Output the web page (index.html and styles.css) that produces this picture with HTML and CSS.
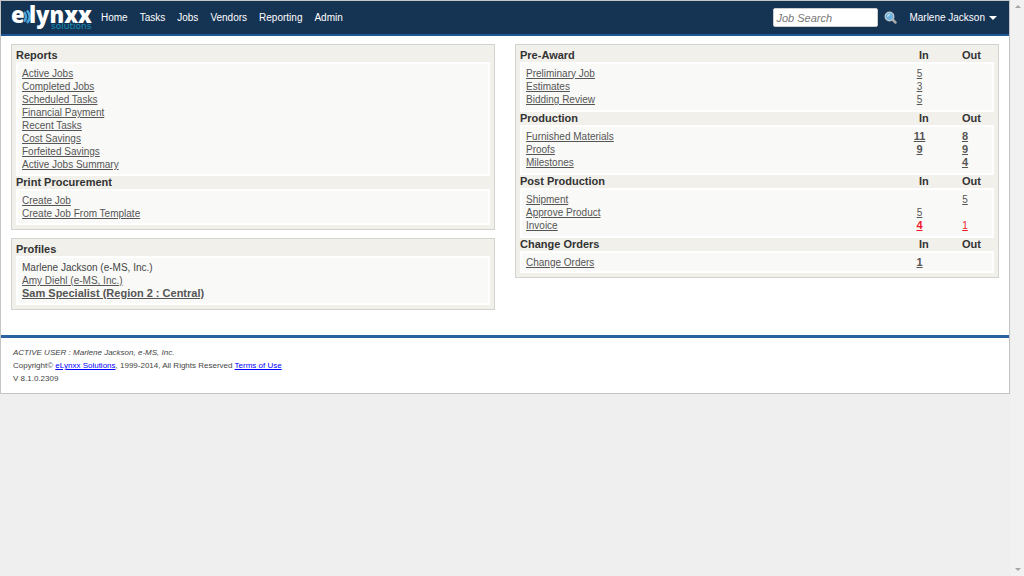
FILE: index.html
```
<!DOCTYPE html>
<html lang="en">
<head>
<meta charset="utf-8">
<title>eLynxx Solutions</title>
<link rel="stylesheet" href="styles.css">
</head>
<body>
<div class="page">
  <header class="topbar">
    <a class="logo" href="#" aria-label="eLynxx Solutions">
      <svg width="82" height="30" viewBox="0 0 82 30">
        <text class="logo-name" x="0" y="20">e</text>
        <path d="M13 9q4 5 0 9.500M16 7.500q5.500 6.500 0 12.500" fill="none" stroke="#4aa5dc" stroke-width="2.500"/>
        <text class="logo-name" x="18" y="20">lynxx</text>
        <text class="logo-sub" x="40" y="26">solutions</text>
      </svg>
    </a>
    <nav class="nav">
      <a href="#">Home</a>
      <a href="#">Tasks</a>
      <a href="#">Jobs</a>
      <a href="#">Vendors</a>
      <a href="#">Reporting</a>
      <a href="#">Admin</a>
    </nav>
    <form class="search">
      <input type="text" placeholder="Job Search" aria-label="Job Search">
      <button type="button" aria-label="Search">
        <svg width="14" height="14" viewBox="0 0 14 14">
          <path d="M8.500 8.500l3 3" stroke="#a9a9a9" stroke-width="2.500" stroke-linecap="round"/>
          <circle cx="5.500" cy="5.500" r="4.300" fill="#6db2dc" stroke="#b9c4cc" stroke-width="1.400"/>
          <path d="M3 6q0-3 3.500-3.200q-.5 2.500-3.500 3.200z" fill="#b5dcf2"/>
        </svg>
      </button>
    </form>
    <button class="user" type="button">Marlene Jackson<span class="caret"></span></button>
  </header>

  <main class="columns">
    <div class="column">
      <section class="panel">
        <h2>Reports</h2>
        <ul class="box">
          <li><a href="#">Active Jobs</a></li>
          <li><a href="#">Completed Jobs</a></li>
          <li><a href="#">Scheduled Tasks</a></li>
          <li><a href="#">Financial Payment</a></li>
          <li><a href="#">Recent Tasks</a></li>
          <li><a href="#">Cost Savings</a></li>
          <li><a href="#">Forfeited Savings</a></li>
          <li><a href="#">Active Jobs Summary</a></li>
        </ul>
        <h2>Print Procurement</h2>
        <ul class="box">
          <li><a href="#">Create Job</a></li>
          <li><a href="#">Create Job From Template</a></li>
        </ul>
      </section>
      <section class="panel">
        <h2>Profiles</h2>
        <ul class="box">
          <li>Marlene Jackson (e-MS, Inc.)</li>
          <li><a href="#">Amy Diehl (e-MS, Inc.)</a></li>
          <li><a class="strong" href="#">Sam Specialist (Region 2 : Central)</a></li>
        </ul>
      </section>
    </div>

    <div class="column">
      <section class="panel">
        <table class="counts">
          <colgroup><col><col class="col-in"><col class="col-out"></colgroup>
          <tbody>
            <tr><th>Pre-Award</th><th>In</th><th>Out</th></tr>
            <tr><td><a href="#">Preliminary Job</a></td><td><a href="#">5</a></td><td></td></tr>
            <tr><td><a href="#">Estimates</a></td><td><a href="#">3</a></td><td></td></tr>
            <tr><td><a href="#">Bidding Review</a></td><td><a href="#">5</a></td><td></td></tr>
          </tbody>
          <tbody>
            <tr><th>Production</th><th>In</th><th>Out</th></tr>
            <tr><td><a href="#">Furnished Materials</a></td><td><a class="strong" href="#">11</a></td><td><a class="strong" href="#">8</a></td></tr>
            <tr><td><a href="#">Proofs</a></td><td><a class="strong" href="#">9</a></td><td><a class="strong" href="#">9</a></td></tr>
            <tr><td><a href="#">Milestones</a></td><td></td><td><a class="strong" href="#">4</a></td></tr>
          </tbody>
          <tbody>
            <tr><th>Post Production</th><th>In</th><th>Out</th></tr>
            <tr><td><a href="#">Shipment</a></td><td></td><td><a href="#">5</a></td></tr>
            <tr><td><a href="#">Approve Product</a></td><td><a href="#">5</a></td><td></td></tr>
            <tr><td><a href="#">Invoice</a></td><td><a class="late strong" href="#">4</a></td><td><a class="late" href="#">1</a></td></tr>
          </tbody>
          <tbody>
            <tr><th>Change Orders</th><th>In</th><th>Out</th></tr>
            <tr><td><a href="#">Change Orders</a></td><td><a class="strong" href="#">1</a></td><td></td></tr>
          </tbody>
        </table>
      </section>
    </div>
  </main>

  <footer class="footer">
    <p class="active-user">ACTIVE USER : Marlene Jackson, e-MS, Inc.</p>
    <p>Copyright© <a href="#">eLynxx Solutions</a>, 1999-2014, All Rights Reserved <a href="#">Terms of Use</a></p>
    <p>V 8.1.0.2309</p>
  </footer>
</div>
<div class="scrolltrack"><span class="arrow-up"></span><span class="arrow-down"></span></div>
</body>
</html>
```
FILE: styles.css
```
* { box-sizing: border-box; }

body {
  margin: 0;
  display: flex;
  align-items: flex-start;
  min-height: 100vh;
  background: #efefef;
  color: #444;
  font: 10px/13px "Liberation Sans", Arial, sans-serif;
}

h2, p, ul { margin: 0; padding: 0; list-style: none; }
button, input { font: inherit; }
button { border: 0; padding: 0; background: none; color: inherit; cursor: pointer; }

.page {
  flex: 1;
  margin-right: 1px;
  background: #fff;
  border: 1px solid #c4c4c4;
}

.topbar {
  display: flex;
  align-items: center;
  height: 35px;
  padding: 0 12px 0 10px;
  background: #153353;
  border-bottom: 2px solid #1f5796;
  color: #fff;
}

.logo { display: flex; }
.logo svg { overflow: visible; }
.logo-name {
  fill: #fff;
  font: 800 22px "Open Sans", sans-serif;
}
.logo-sub {
  fill: #1790b8;
  font: 9px "DejaVu Sans", sans-serif;
}

.nav { display: flex; gap: 12px; margin-left: 8px; }
.nav a { color: #fff; text-decoration: none; }

.search { display: flex; align-items: center; gap: 6px; margin-left: auto; }
.search input {
  width: 105px;
  height: 19px;
  padding: 0 2px;
  border: 1px solid #ccc;
  border-radius: 2px;
  background: #fff;
  font-size: 11px;
}
.search input::placeholder { color: #777; font-style: italic; opacity: 1; }
.search button { display: flex; }

.user { display: flex; align-items: center; gap: 4px; margin-left: 11px; }
.caret {
  border: 4px solid transparent;
  border-top-color: #fff;
  border-bottom: 0;
}

.columns {
  display: grid;
  grid-template-columns: 1fr 1fr;
  gap: 20px;
  padding: 8px 10px 25px;
}
.column { display: flex; flex-direction: column; gap: 8px; }

.panel {
  padding: 4px;
  background: #f1f0eb;
  border: 1px solid #d3d3d0;
}
.panel h2, .counts th {
  color: #333;
  font-size: 11px;
  font-weight: bold;
}
.panel h2 { line-height: 13px; }
.panel a { color: #555; }
.panel .strong { font-size: 11px; font-weight: bold; }
.panel .late { color: #f01428; }

.box {
  padding: 3px 4px;
  background: #f9f9f7;
  border: 2px solid #fff;
}
.box li { height: 13px; }

.counts {
  width: 100%;
  table-layout: fixed;
  border-spacing: 0;
}
.col-in { width: 45px; }
.col-out { width: 54px; }
.counts th { padding: 0; text-align: left; }
.counts th:nth-child(2) { padding-left: 24px; }
.counts th:nth-child(3) { padding-left: 22px; }
.counts td {
  height: 13px;
  padding: 0;
  background: #f9f9f7;
  border: 0 solid #fff;
  text-align: center;
  line-height: 12px;
}
.counts td:first-child { padding-left: 4px; border-left-width: 2px; text-align: left; }
.counts td:nth-child(2) { padding-left: 4px; }
.counts td:last-child { padding-right: 2px; border-right-width: 2px; }
.counts tr:nth-child(2) td { height: 18px; padding-top: 3px; border-top-width: 2px; }
.counts tr:last-child td { height: 19px; padding-bottom: 4px; border-bottom-width: 2px; }
.counts tbody:last-child tr:last-child td { height: 22px; padding-bottom: 2px; }

.footer {
  padding: 8px 12px;
  border-top: 3px solid #2a61a0;
  font-size: 8px;
}
.footer a { color: #00f; }
.active-user { font-style: italic; }

.scrolltrack {
  display: flex;
  flex-direction: column;
  align-items: center;
  justify-content: space-between;
  width: 13px;
  height: 100vh;
  padding: 5px 0;
  background: #f1f1f1;
}
.arrow-up, .arrow-down { border: 3px solid transparent; }
.arrow-up { border-bottom-color: #a5a5a5; border-top: 0; }
.arrow-down { border-top-color: #a5a5a5; border-bottom: 0; }
```
